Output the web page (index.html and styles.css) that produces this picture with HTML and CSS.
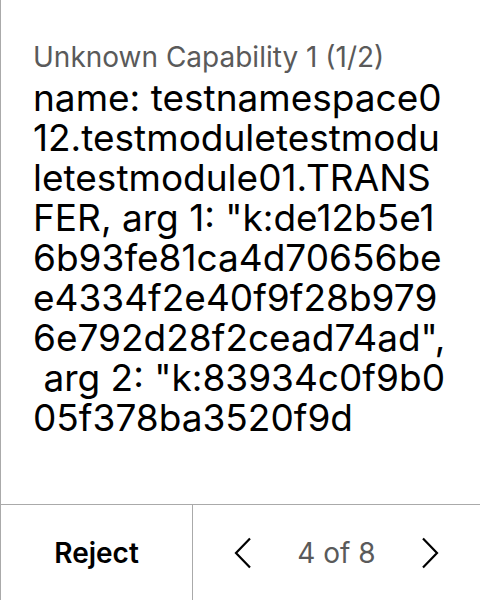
FILE: index.html
```html
<!DOCTYPE html>
<html>
<head>
<meta charset="utf-8">
<link rel="stylesheet" href="styles.css">
</head>
<body>
<div class="screen">
  <div class="content">
    <div class="label">Unknown Capability 1 (1/2)</div>
    <div class="value">name: testnamespace012.testmoduletestmoduletestmodule01.TRANSFER, arg 1: "k:de12b5e16b93fe81ca4d70656bee4334f2e40f9f28b9796e792d28f2cead74ad", arg 2: "k:83934c0f9b005f378ba3520f9d</div>
  </div>
  <div class="footer">
    <div class="reject">Reject</div>
    <div class="pager">
      <svg class="chev" width="18" height="32" viewBox="0 0 18 32"><path d="M16 1.5 L2 16 L16 30.5" fill="none" stroke="#000" stroke-width="2.2"/></svg>
      <span class="count">4 of 8</span>
      <svg class="chev" width="18" height="32" viewBox="0 0 18 32"><path d="M2 1.5 L16 16 L2 30.5" fill="none" stroke="#000" stroke-width="2.2"/></svg>
    </div>
  </div>
</div>
</body>
</html>
```
FILE: styles.css
```css
html, body {
  margin: 0;
  padding: 0;
  background: #fff;
}
.screen {
  width: 480px;
  height: 600px;
  box-sizing: border-box;
  border-left: 1px solid #aaa;
  display: flex;
  flex-direction: column;
  font-family: Inter, "Noto Sans", sans-serif;
}
.content {
  height: 505px;
  box-sizing: border-box;
  padding: 41px 32px 0 32px;
  border-bottom: 1px solid #aaa;
}
.label {
  font-size: 28px;
  line-height: 32px;
  color: #5a5a5a;
}
.value {
  font-size: 37px;
  line-height: 40px;
  color: #000;
  white-space: break-spaces;
  line-break: anywhere;
  margin-top: 5px;
}
.footer {
  flex: 1;
  display: flex;
}
.reject {
  width: 191px;
  border-right: 1px solid #aaa;
  display: flex;
  align-items: center;
  justify-content: center;
  font-size: 28px;
  font-weight: 600;
  color: #000;
}
.pager {
  flex: 1;
  display: flex;
  align-items: center;
  justify-content: space-between;
  padding: 0 41px 0 41px;
}
.count {
  font-size: 28px;
  color: #5a5a5a;
}
.chev {
  display: block;
}
```
